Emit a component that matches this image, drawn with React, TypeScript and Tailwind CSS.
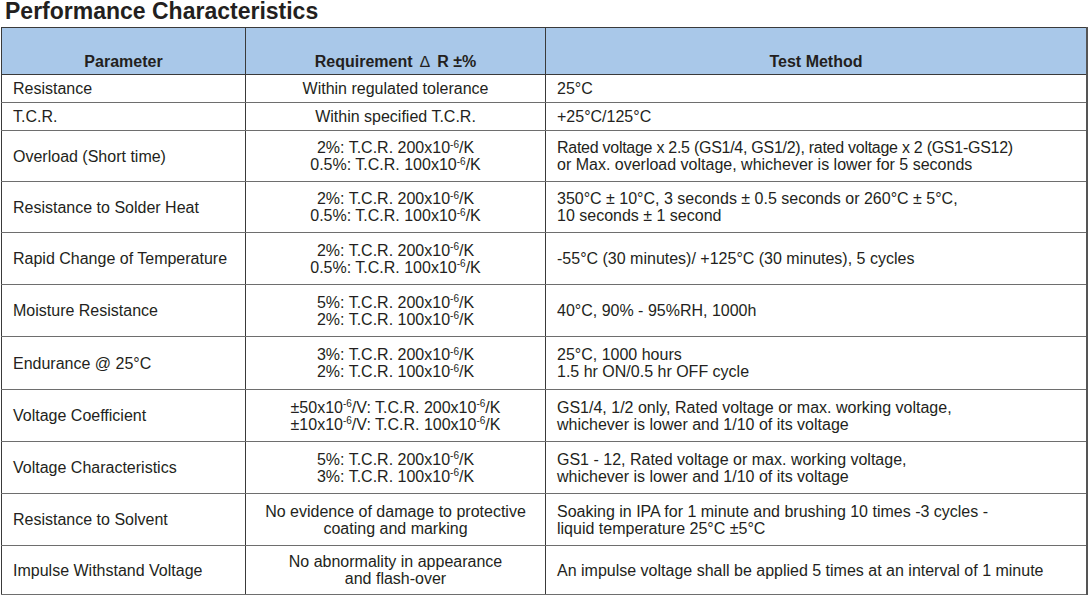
import React from "react";

const S = ({ children }: { children: React.ReactNode }) => (
  <sup className="text-[10px] top-[-0.55em]">{children}</sup>
);

const tcr = (a: string, b: string, c = "200", d = "100") => (
  <>
    <div>
      {a}: T.C.R. {c}x10<S>-6</S>/K
    </div>
    <div>
      {b}: T.C.R. {d}x10<S>-6</S>/K
    </div>
  </>
);

type Row = { p: string; r: React.ReactNode; t: React.ReactNode; h: string };

const rows: Row[] = [
  { p: "Resistance", r: "Within regulated tolerance", t: "25°C", h: "h-[28px]" },
  { p: "T.C.R.", r: "Within specified T.C.R.", t: "+25°C/125°C", h: "h-[28px]" },
  {
    p: "Overload (Short time)",
    r: tcr("2%", "0.5%"),
    t: (
      <>
        <div className="tracking-[-0.27px]">
          Rated voltage x 2.5 (GS1/4, GS1/2), rated voltage x 2 (GS1-GS12)
        </div>
        <div>or Max. overload voltage, whichever is lower for 5 seconds</div>
      </>
    ),
    h: "h-[51px]",
  },
  {
    p: "Resistance to Solder Heat",
    r: tcr("2%", "0.5%"),
    t: (
      <>
        <div>350°C ± 10°C, 3 seconds ± 0.5 seconds or 260°C ± 5°C,</div>
        <div>10 seconds ± 1 second</div>
      </>
    ),
    h: "h-[51px]",
  },
  {
    p: "Rapid Change of Temperature",
    r: tcr("2%", "0.5%"),
    t: "-55°C (30 minutes)/ +125°C (30 minutes), 5 cycles",
    h: "h-[52px]",
  },
  {
    p: "Moisture Resistance",
    r: tcr("5%", "2%"),
    t: "40°C, 90% - 95%RH, 1000h",
    h: "h-[52px]",
  },
  {
    p: "Endurance @ 25°C",
    r: tcr("3%", "2%"),
    t: (
      <>
        <div>25°C, 1000 hours</div>
        <div>1.5 hr ON/0.5 hr OFF cycle</div>
      </>
    ),
    h: "h-[53px]",
  },
  {
    p: "Voltage Coefficient",
    r: (
      <>
        <div>
          ±50x10<S>-6</S>/V: T.C.R. 200x10<S>-6</S>/K
        </div>
        <div>
          ±10x10<S>-6</S>/V: T.C.R. 100x10<S>-6</S>/K
        </div>
      </>
    ),
    t: (
      <>
        <div>GS1/4, 1/2 only, Rated voltage or max. working voltage,</div>
        <div>whichever is lower and 1/10 of its voltage</div>
      </>
    ),
    h: "h-[52px]",
  },
  {
    p: "Voltage Characteristics",
    r: tcr("5%", "3%"),
    t: (
      <>
        <div>GS1 - 12, Rated voltage or max. working voltage,</div>
        <div>whichever is lower and 1/10 of its voltage</div>
      </>
    ),
    h: "h-[52px]",
  },
  {
    p: "Resistance to Solvent",
    r: (
      <>
        <div>No evidence of damage to protective</div>
        <div>coating and marking</div>
      </>
    ),
    t: (
      <>
        <div>Soaking in IPA for 1 minute and brushing 10 times -3 cycles -</div>
        <div>liquid temperature 25°C ±5°C</div>
      </>
    ),
    h: "h-[52px]",
  },
  {
    p: "Impulse Withstand Voltage",
    r: (
      <>
        <div>No abnormality in appearance</div>
        <div>and flash-over</div>
      </>
    ),
    t: "An impulse voltage shall be applied 5 times at an interval of 1 minute",
    h: "h-[49px]",
  },
];

export default function App() {
  return (
    <div
      className="w-[1089px] h-[596px] bg-white text-[#231f20] overflow-hidden"
      style={{ fontFamily: '"Liberation Sans", Arial, sans-serif' }}
    >
      <h1 className="text-[23px] font-bold leading-[25px] pl-[5px] h-[27px] -mt-[1px]">
        Performance Characteristics
      </h1>
      <table className="ml-[1px] mt-[1px] w-[1087px] border-collapse table-fixed text-[16px] leading-[17px]">
        <colgroup>
          <col className="w-[244px]" />
          <col className="w-[300px]" />
          <col />
        </colgroup>
        <thead>
          <tr className="h-[47px] bg-[#a9c8e9]">
            <th className="border border-[#3a3a3a] align-bottom pb-[4px] font-bold text-center">
              Parameter
            </th>
            <th className="border border-[#3a3a3a] align-bottom pb-[4px] font-bold text-center">
              Requirement <span className="mx-[3px] font-normal">∆</span> R ±%
            </th>
            <th className="border border-[#3a3a3a] border-r-2 border-r-[#555] align-bottom pb-[4px] font-bold text-center">
              Test Method
            </th>
          </tr>
        </thead>
        <tbody>
          {rows.map((r, i) => (
            <tr key={i} className={r.h}>
              <td className="border-x border-x-[#3a3a3a] border-y border-y-[#6e6e6e] pl-[11px] align-middle">
                {r.p}
              </td>
              <td className="border-x border-x-[#3a3a3a] border-y border-y-[#6e6e6e] text-center align-middle">
                {r.r}
              </td>
              <td className="border-l border-l-[#3a3a3a] border-r-2 border-r-[#555] border-y border-y-[#6e6e6e] pl-[11px] align-middle">
                {r.t}
              </td>
            </tr>
          ))}
        </tbody>
      </table>
    </div>
  );
}
